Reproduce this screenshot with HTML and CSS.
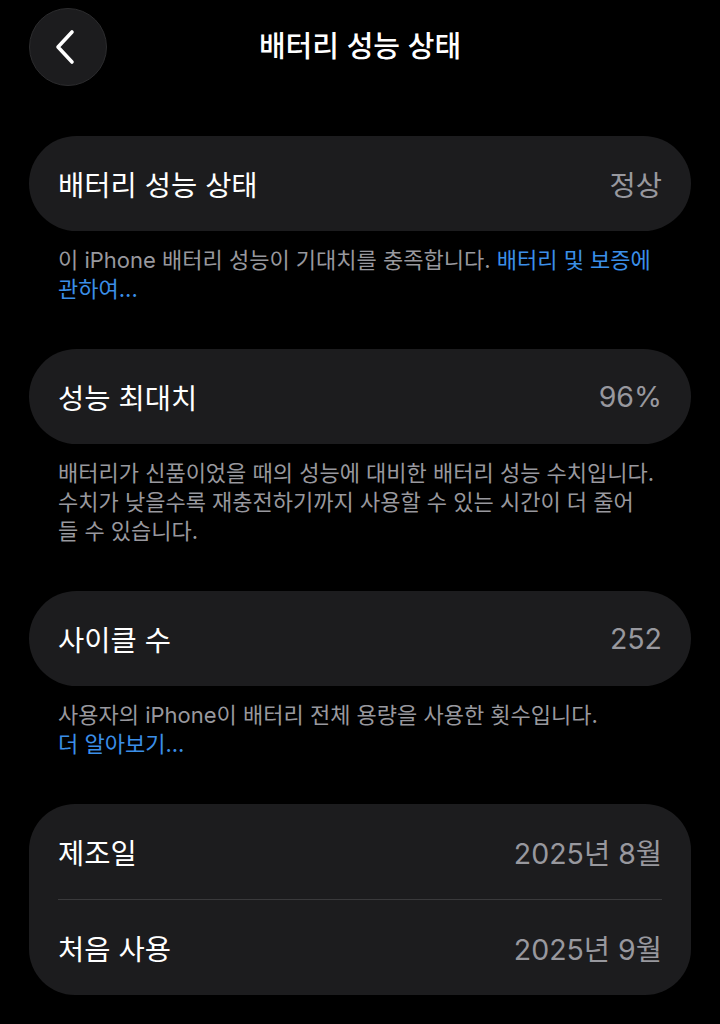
FILE: index.html
```html
<!DOCTYPE html>
<html lang="ko">
<head>
<meta charset="utf-8">
<title>배터리 성능 상태</title>
<link rel="stylesheet" href="styles.css">
</head>
<body>
<div class="page">
  <header class="header">
    <button class="back" aria-label="뒤로">
      <svg width="24" height="36" viewBox="0 0 24 36"><path d="M19 3 L5 18 L19 33" fill="none" stroke="#fff" stroke-width="3.6" stroke-linecap="round" stroke-linejoin="round"/></svg>
    </button>
    <h1 class="title">배터리 성능 상태</h1>
  </header>

  <section class="group">
    <div class="card">
      <div class="row"><span class="label">배터리 성능 상태</span><span class="value">정상</span></div>
    </div>
    <p class="footer">이 iPhone 배터리 성능이 기대치를 충족합니다. <a class="link">배터리 및 보증에 관하여...</a></p>
  </section>

  <section class="group">
    <div class="card">
      <div class="row"><span class="label">성능 최대치</span><span class="value">96%</span></div>
    </div>
    <p class="footer">배터리가 신품이었을 때의 성능에 대비한 배터리 성능 수치입니다.<br>수치가 낮을수록 재충전하기까지 사용할 수 있는 시간이 더 줄어<br>들 수 있습니다.</p>
  </section>

  <section class="group">
    <div class="card">
      <div class="row"><span class="label">사이클 수</span><span class="value">252</span></div>
    </div>
    <p class="footer">사용자의 iPhone이 배터리 전체 용량을 사용한 횟수입니다.<br><a class="link">더 알아보기...</a></p>
  </section>

  <section class="group">
    <div class="card card-multi">
      <div class="row"><span class="label">제조일</span><span class="value">2025년 8월</span></div>
      <div class="sep"></div>
      <div class="row"><span class="label">처음 사용</span><span class="value">2025년 9월</span></div>
    </div>
  </section>
</div>
</body>
</html>
```

FILE: styles.css
```css
html, body {
  margin: 0;
  padding: 0;
  background: #000;
}
body {
  font-family: Inter, "Noto Sans CJK KR", sans-serif;
  color: #fff;
  width: 720px;
  height: 1024px;
  overflow: hidden;
}
.page {
  padding: 0 29px;
}
.header {
  position: relative;
  height: 136px;
  display: flex;
  align-items: flex-start;
}
.back {
  margin-top: 8px;
  width: 78px;
  height: 78px;
  border-radius: 50%;
  background: #1c1c1e;
  border: 1px solid #2c2c2e;
  display: flex;
  align-items: center;
  justify-content: center;
  padding: 0 6px 0 0;
  box-sizing: border-box;
}
.back svg {
  display: block;
}
.title {
  position: absolute;
  left: 0;
  right: 0;
  top: 27px;
  margin: 0;
  text-align: center;
  font-size: 29px;
  line-height: 40px;
  font-weight: 500;
  pointer-events: none;
}
.group {
  margin-bottom: 45px;
}
.card {
  background: #1c1c1e;
  border-radius: 48px;
  padding: 0 29px;
}
.card-multi {
  border-radius: 46px;
}
.row {
  height: 95px;
  display: flex;
  align-items: center;
  justify-content: space-between;
  font-size: 28.5px;
}
.label {
  color: #fff;
}
.value {
  color: #98989e;
}
.sep {
  height: 1px;
  background: #3a3a3c;
}
.footer {
  margin: 15px 0 0;
  padding: 0 10px 0 29px;
  font-size: 22px;
  line-height: 29px;
  color: #98989e;
  word-break: keep-all;
}
.link {
  color: #3b8fe8;
}
```
